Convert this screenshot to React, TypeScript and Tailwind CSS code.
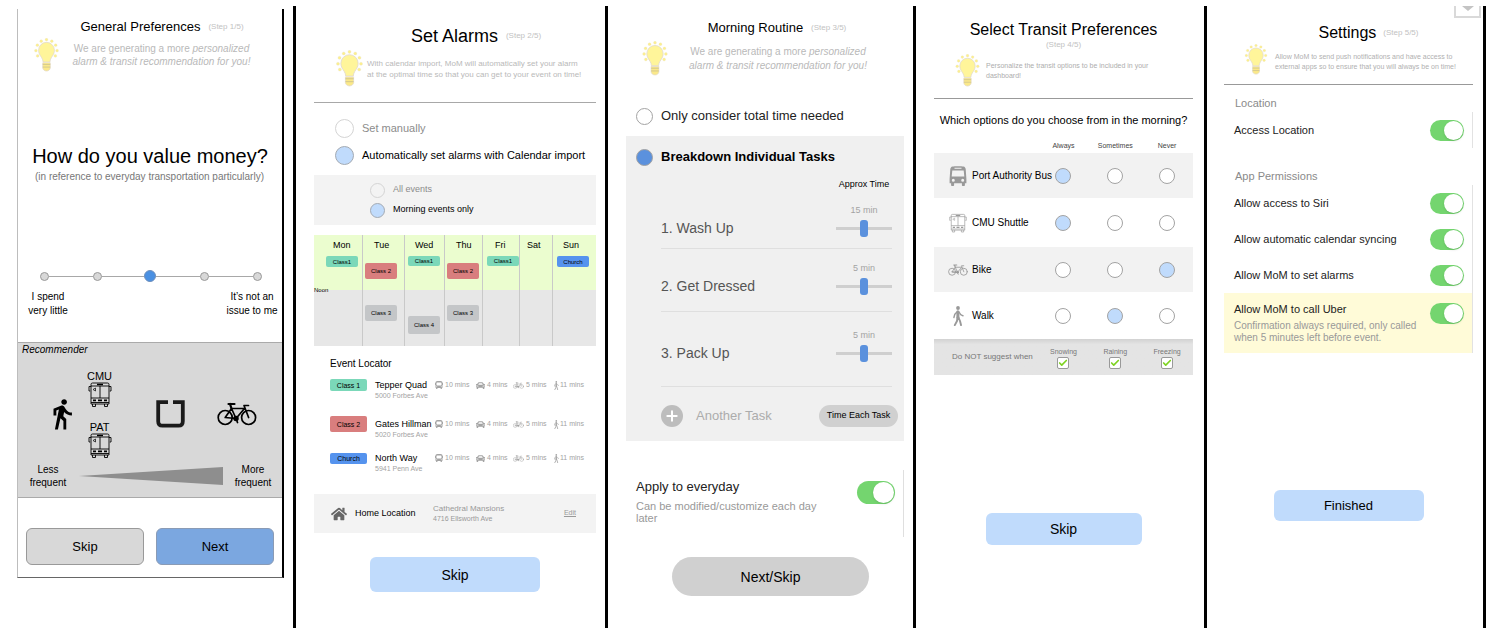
import type { ReactNode } from "react";
import { FaBus, FaCar, FaHome } from "react-icons/fa";
import { MdDirectionsWalk } from "react-icons/md";
import { Check, Plus } from "lucide-react";

type IconProps = { className?: string };

function Bulb({ className }: IconProps) {
  return (
    <svg viewBox="0 0 26 36" className={className} aria-hidden="true">
      <g fill="#fdf08c" stroke="#e6dfd0" strokeWidth="0.3">
        <circle cx="13" cy="1.8" r="1.500" />
        <circle cx="7.4" cy="3.4" r="1.500" />
        <circle cx="18.6" cy="3.4" r="1.500" />
        <circle cx="3.3" cy="7.6" r="1.500" />
        <circle cx="22.7" cy="7.6" r="1.500" />
        <circle cx="1.8" cy="13.4" r="1.500" />
        <circle cx="24.2" cy="13.4" r="1.500" />
        <circle cx="3.6" cy="19" r="1.500" />
        <circle cx="22.4" cy="19" r="1.500" />
      </g>
      <path
        d="M13 4.600a8.400 8.400 0 0 0-8.400 8.400c0 3.600 1.900 5.600 3.300 7.900.9 1.500 1.300 2.800 1.400 4.500h7.400c.1-1.700.5-3 1.400-4.500 1.400-2.300 3.300-4.300 3.300-7.900A8.400 8.400 0 0 0 13 4.600z"
        fill="#fff59a"
        stroke="#e0d8cc"
        strokeWidth="0.8"
      />
      <path
        d="M9 26.200h8v5.500c0 1.500-1.700 3.300-4 3.300s-4-1.800-4-3.300z"
        fill="#fbe98a"
        stroke="#e0d8cc"
        strokeWidth="0.7"
      />
      <path d="M9 28h8M9 30.800h8" stroke="#c9c08e" strokeWidth="0.8" />
    </svg>
  );
}

function BusOutline({ className }: IconProps) {
  return (
    <svg
      viewBox="0 0 24 25"
      className={className}
      fill="none"
      stroke="currentColor"
      strokeWidth="0.9"
      aria-hidden="true"
    >
      <path d="M4.500 1h15a1.500 1.500 0 0 1 1.500 1.500V22H3V2.500A1.500 1.500 0 0 1 4.500 1z" />
      <path d="M3 4h18M3 16h18M12 4v12M3 20.500h18" />
      <path d="M9 2.500h6" strokeWidth="1.500" />
      <path d="M3 4.500H1v4.500h1.200M21 4.500h2v4.500h-1.200" />
      <path d="M4.500 22v2.500h3V22M16.500 22v2.500h3V22" />
      <path d="M5 18.300h3M10 18.300h4M16 18.300h3" strokeWidth="1.800" />
      <path d="M5 7.500l2.500-1.500v3z" strokeWidth="0.700" />
    </svg>
  );
}

function BusSolid({ className }: IconProps) {
  return (
    <svg viewBox="0 0 18 20" className={className} fill="currentColor" aria-hidden="true">
      <path
        fillRule="evenodd"
        d="M3.500.5C5.500 0 12.500 0 14.500.5c1.300.3 2 1.300 2.200 2.600l.7 9.900v4.300h-1.500V19c0 .6-.4 1-1 1h-1c-.6 0-1-.4-1-1v-1.700H5.100V19c0 .6-.4 1-1 1h-1c-.6 0-1-.4-1-1v-1.700H.6V13l.7-9.900C1.500 1.800 2.200.800 3.500.5zM5.500 1.800v1h7v-1zM3.300 4.500 2.700 10.500h12.600l-.6-6zM4.300 12.700a1.500 1.500 0 1 0 0 3 1.500 1.500 0 0 0 0-3zm9.400 0a1.500 1.500 0 1 0 0 3 1.500 1.500 0 0 0 0-3z"
      />
    </svg>
  );
}

function Bike({ className }: IconProps) {
  return (
    <svg
      viewBox="0 0 40 24"
      className={className}
      fill="none"
      stroke="currentColor"
      strokeWidth="1.700"
      strokeLinecap="round"
      strokeLinejoin="round"
      aria-hidden="true"
    >
      <circle cx="8.200" cy="15.500" r="7" />
      <circle cx="31.600" cy="15.500" r="7" />
      <path d="M8.200 15.500 14.500 6.500h13l-8.500 10zM14.500 6.500l4.500 10M31.600 15.500 27 3.500h4.500M8.200 15.500l10.800 1" />
      <path d="M11.500 2h6M14.500 6.500 13 2" strokeWidth="2.200" />
      <circle cx="19" cy="16.500" r="1.900" fill="currentColor" />
      <path d="M19 16.500l1.500 4" />
    </svg>
  );
}

function Pedestrian({ className }: IconProps) {
  return (
    <svg
      viewBox="0 0 11 20"
      className={className}
      fill="none"
      stroke="currentColor"
      strokeLinecap="round"
      strokeLinejoin="round"
      aria-hidden="true"
    >
      <circle cx="5" cy="2" r="1.900" fill="currentColor" stroke="none" />
      <path d="M4.900 5.800v5.700" strokeWidth="3" />
      <path d="M4 6 1.800 8.300.9 11.500M6 6l1.700 2.700 2.400 1.100" strokeWidth="1.400" />
      <path d="M4.500 11.500 4 15l-2.200 4.100M5.500 11.500 7 15l1 4.100" strokeWidth="1.900" />
    </svg>
  );
}

function UberMark({ className }: IconProps) {
  return (
    <svg viewBox="0 0 29 28" className={className} aria-hidden="true">
      <path
        d="M12 2.200H2.200v19c0 2.700 1.600 4.500 4.300 4.500h16c2.700 0 4.300-1.800 4.300-4.500v-19H17"
        fill="none"
        stroke="currentColor"
        strokeWidth="3.800"
      />
    </svg>
  );
}

function Title({ text, step, className }: { text: string; step: string; className: string }) {
  return (
    <header className={`flex items-center whitespace-nowrap ${className}`}>
      <h2>{text}</h2>
      <span className="text-[8px] text-[#c2c2c2]">({step})</span>
    </header>
  );
}

function Recommendation() {
  return (
    <p className="flex-1 whitespace-nowrap text-center text-[10px] text-[#b9b9b9]">
      We are generating a more <em>personalized</em>
      <br />
      <em>alarm &amp; transit recommendation for you!</em>
    </p>
  );
}

function Toggle({ id, large }: { id: string; large?: boolean }) {
  const size = large
    ? "h-[23px] w-[38px] before:size-[21px] checked:before:ml-[15px]"
    : "h-[21px] w-[34px] before:size-[19px] checked:before:ml-[13px]";
  return (
    <input
      id={id}
      type="checkbox"
      defaultChecked
      className={`block shrink-0 cursor-pointer appearance-none rounded-full bg-gray-300 p-px before:block before:rounded-full before:bg-white before:shadow-sm before:content-[''] checked:bg-[#74d56f] ${size}`}
    />
  );
}

const action = "flex items-center justify-center rounded-md bg-[#c0dbfc] text-black";

/* ---------- Step 1 ---------- */

function GeneralPreferences() {
  return (
    <section className="min-w-0 border-r-[3px] border-black pt-[3px] pr-[9px] pl-[17px]">
      <div className="border-b border-l border-r-2 border-b-[#666] border-l-[#bdbdbd] border-r-black pt-[10px] pb-3">
        <Title text="General Preferences" step="Step 1/5" className="h-4 justify-center gap-2 pl-6 text-[13px]" />
        <div className="mt-[3px] flex h-[34px] items-center pr-[18px] pl-4 leading-[13px]">
          <Bulb className="h-[34px] w-[25px]" />
          <Recommendation />
        </div>
        <h3 className="mt-[70px] h-7 whitespace-nowrap text-center text-xl leading-7">How do you value money?</h3>
        <p className="h-[14px] whitespace-nowrap pl-[17px] text-[10px] leading-[14px] text-[#777]">
          (in reference to everyday transportation particularly)
        </p>

        <fieldset className="mt-[86px] flex h-3 items-center pr-5 pl-[22px]">
          {[1, 2, 3, 4, 5].map((n) => (
            <div key={n} className={n === 1 ? "flex items-center" : "flex flex-1 items-center"}>
              {n > 1 && <div className="h-px flex-1 bg-[#a8a8a8]" />}
              <input
                type="radio"
                name="money"
                aria-label={`Value ${n} of 5`}
                defaultChecked={n === 3}
                className="size-[9px] appearance-none rounded-full border border-[#999] bg-[#d8d8d8] checked:size-3 checked:border-[#6f8fbb] checked:bg-[#4a90e2]"
              />
            </div>
          ))}
        </fieldset>
        <div className="mt-2 flex justify-between text-center text-[10px] leading-[14px]">
          <p className="w-[60px]">I spend<br />very little</p>
          <p className="w-[60px] whitespace-nowrap">It’s not an<br />issue to me</p>
        </div>

        <div className="mt-6 border-y border-[#aaa] bg-[#d8d8d8] pb-2">
          <p className="h-[14px] pl-1 text-[10px] italic leading-[14px]">Recommender</p>
          <div className="mt-[13px] flex items-center pl-[27px]">
            <MdDirectionsWalk className="size-[34px]" />
            <div className="ml-2 flex flex-col gap-[14px] text-center text-[11px] leading-3">
              <div className="flex flex-col items-center">
                CMU
                <BusOutline className="h-[25px] w-6" />
              </div>
              <div className="flex flex-col items-center">
                PAT
                <BusOutline className="h-[25px] w-6" />
              </div>
            </div>
            <UberMark className="ml-[44px] h-7 w-[29px] text-[#1a1a1a]" />
            <Bike className="ml-8 h-6 w-10" />
          </div>
          <div className="mt-[5px] flex items-center text-center text-[10px] leading-[13px]">
            <p className="w-[60px]">Less<br />frequent</p>
            <svg viewBox="0 0 148 18" preserveAspectRatio="none" className="mx-px h-[18px] min-w-0 flex-1" aria-hidden="true">
              <path d="M0 9 148 0v18z" fill="#8e8e8e" />
            </svg>
            <p className="w-[58px]">More<br />frequent</p>
          </div>
        </div>

        <div className="mt-[30px] flex gap-3 px-2 text-[13px]">
          <button className="h-[37px] flex-1 rounded-md border border-[#999] bg-[#d8d8d8]">Skip</button>
          <button className="h-[37px] flex-1 rounded-md border border-[#8a9bb5] bg-[#7ba7e0]">Next</button>
        </div>
      </div>
    </section>
  );
}

/* ---------- Step 2 ---------- */

const radioPale =
  "shrink-0 appearance-none rounded-full border border-[#d4d4d4] checked:border-[#a3aab3] checked:bg-[#c0dbfc]";

const teal = "bg-[#7bd8b9]";
const red = "bg-[#d97e7e]";
const blue = "bg-[#5593ee]";
const grey = "bg-[#c4c6c8]";

type Chip = { text: string; className: string };

const week: { day: string; head: string; am?: Chip; pm?: Chip }[] = [
  { day: "Mon", head: "pl-[19px]", am: { text: "Class1", className: `mt-0 ml-3 h-[11px] ${teal}` } },
  {
    day: "Tue",
    head: "pl-[11px]",
    am: { text: "Class 2", className: `mt-3 ml-[2px] h-4 ${red}` },
    pm: { text: "Class 3", className: `mt-[15px] ml-[2px] h-4 ${grey}` },
  },
  {
    day: "Wed",
    head: "pl-[10px]",
    am: { text: "Class1", className: `mt-[2px] ml-[3px] h-[10px] ${teal}` },
    pm: { text: "Class 4", className: `mt-[26px] ml-[3px] h-[18px] ${grey}` },
  },
  {
    day: "Thu",
    head: "pl-[11px]",
    am: { text: "Class 2", className: `mt-3 ml-[2px] h-4 ${red}` },
    pm: { text: "Class 3", className: `mt-[15px] ml-[2px] h-4 ${grey}` },
  },
  { day: "Fri", head: "pl-3", am: { text: "Class1", className: `mt-[2px] ml-1 h-[10px] ${teal}` } },
  { day: "Sat", head: "pl-[7px]" },
  { day: "Sun", head: "pl-[10px]", am: { text: "Church", className: `mt-0 ml-1 h-[11px] ${blue}` } },
];

function CalendarChip({ chip }: { chip: Chip }) {
  return (
    <div
      className={`flex w-8 items-center justify-center rounded-[2px] text-[6px] leading-none whitespace-nowrap ${chip.className}`}
    >
      {chip.text}
    </div>
  );
}

const places = [
  { tag: "Class 1", color: teal, tagSize: "h-3", row: "h-[39px]", name: "Tepper Quad", address: "5000 Forbes Ave" },
  { tag: "Class 2", color: red, tagSize: "h-4", row: "h-[34px]", name: "Gates Hillman", address: "5020 Forbes Ave" },
  { tag: "Church", color: blue, tagSize: "h-[11px]", row: "h-[43px]", name: "North Way", address: "5941 Penn Ave" },
];

function SetAlarms() {
  return (
    <section className="min-w-0 border-r-[3px] border-black pt-[18px] pr-[9px] pl-[18px]">
      <Title text="Set Alarms" step="Step 2/5" className="h-6 justify-center gap-2 pl-[42px] text-lg" />
      <div className="mt-[2px] flex h-[37px] items-center gap-1 pl-[22px]">
        <Bulb className="h-[37px] w-[27px] shrink-0" />
        <p className="whitespace-nowrap text-[8px] leading-[11px] text-[#b9b9b9]">
          With calendar import, MoM will automatically set your alarm
          <br />
          at the optimal time so that you can get to your event on time!
        </p>
      </div>
      <hr className="mt-[15px] border-[#a8a8a8]" />
      <div className="mt-[15px] flex flex-col gap-[7px] pl-[21px] text-[11px]">
        <label className="flex h-5 items-center gap-2 text-[#8c8c8c]">
          <input type="radio" name="alarm" className={`size-[19px] ${radioPale}`} />
          Set manually
        </label>
        <label className="flex h-5 items-center gap-2 whitespace-nowrap">
          <input type="radio" name="alarm" defaultChecked className={`size-[19px] ${radioPale}`} />
          Automatically set alarms with Calendar import
        </label>
      </div>
      <div className="mt-[10px] flex flex-col gap-1 bg-[#f3f3f3] py-[7px] pl-14 text-[9px]">
        <label className="flex h-4 items-center gap-2 text-[#8c8c8c]">
          <input type="radio" name="events" className={`size-[15px] ${radioPale}`} />
          All events
        </label>
        <label className="flex h-4 items-center gap-2">
          <input type="radio" name="events" defaultChecked className={`size-[15px] ${radioPale}`} />
          Morning events only
        </label>
      </div>

      <div className="relative mt-[10px]">
        <div className="grid grid-cols-[49fr_42fr_40fr_38fr_37fr_33fr_43fr]">
          {week.map((d) => (
            <div key={d.day} className="min-w-0 border-r border-[#c9c9c9] last:border-r-0">
              <div className="h-[55px] bg-[#ebfdcf] pt-1">
                <p className={`mb-[5px] h-3 text-[9px] leading-3 ${d.head}`}>{d.day}</p>
                {d.am && <CalendarChip chip={d.am} />}
              </div>
              <div className="flex h-14 flex-col bg-[#e7e7e7]">{d.pm && <CalendarChip chip={d.pm} />}</div>
            </div>
          ))}
        </div>
        <span className="absolute top-[51px] left-0 text-[6px] leading-2">Noon</span>
      </div>

      <h3 className="mt-[10px] h-4 pl-4 text-[10px] leading-4">Event Locator</h3>
      <ul className="mt-[6px] pl-4">
        {places.map((p) => (
          <li key={p.name} className={`grid grid-cols-[45px_60px_41px_37px_41px_1fr] whitespace-nowrap text-[7px] text-[#a3a3a3] ${p.row}`}>
            <div className="flex h-[14px] items-center">
              <span className={`flex w-[37px] items-center justify-center rounded-[2px] text-[7px] leading-none text-black ${p.color} ${p.tagSize}`}>
                {p.tag}
              </span>
            </div>
            <div>
              <p className="h-[14px] text-[9px] leading-[14px] text-black">{p.name}</p>
              <p className="h-2 leading-2">{p.address}</p>
            </div>
            <span className="flex h-[14px] items-center gap-[2px]"><FaBus className="size-2" />10 mins</span>
            <span className="flex h-[14px] items-center gap-[2px]"><FaCar className="size-[9px]" />4 mins</span>
            <span className="flex h-[14px] items-center gap-[2px]"><Bike className="h-[7px] w-[11px]" />5 mins</span>
            <span className="flex h-[14px] items-center gap-px"><Pedestrian className="h-[9px] w-[5px]" />11 mins</span>
          </li>
        ))}
      </ul>

      <div className="flex h-[39px] items-center bg-[#f3f3f3] pr-5 pl-[17px]">
        <FaHome className="size-4 text-[#666]" />
        <h3 className="ml-2 w-[78px] text-[9px]">Home Location</h3>
        <p className="flex-1 text-[7px] leading-[10px] text-[#999]">
          <span className="text-[8px]">Cathedral Mansions</span>
          <br />
          4716 Ellsworth Ave
        </p>
        <a href="#edit" className="text-[7px] text-[#999] underline">Edit</a>
      </div>
      <button className={`mx-auto mt-6 h-[35px] w-[170px] text-sm ${action}`}>Skip</button>
    </section>
  );
}

/* ---------- Step 3 ---------- */

const radioBlue =
  "size-[17px] shrink-0 appearance-none rounded-full border border-[#a3a3a3] bg-white checked:bg-[#5b91dd]";

const tasks = [
  { id: "wash", label: "1. Wash Up", time: "15 min", row: "h-[59px] pb-[11px]" },
  { id: "dress", label: "2. Get Dressed", time: "5 min", row: "h-[63px] pb-4" },
  { id: "pack", label: "3. Pack Up", time: "5 min", row: "h-[75px] pb-6" },
];

function MorningRoutine() {
  return (
    <section className="min-w-0 border-r-[3px] border-black pt-3 pr-[9px] pl-[18px]">
      <Title text="Morning Routine" step="Step 3/5" className="h-5 justify-center gap-2 pl-6 text-[13px]" />
      <div className="mt-[3px] flex h-[35px] items-center pr-4 pl-4 leading-[14px]">
        <Bulb className="h-[35px] w-[26px]" />
        <Recommendation />
      </div>
      <label className="mt-[30px] flex h-5 items-center gap-2 pl-[10px] text-[13px] text-[#222]">
        <input type="radio" name="routine" className={radioBlue} />
        Only consider total time needed
      </label>
      <div className="mt-[10px] bg-[#f0f0f0] pt-[11px]">
        <label className="flex h-5 items-center gap-2 pl-[10px] text-[13px] font-bold">
          <input type="radio" name="routine" defaultChecked className={radioBlue} />
          Breakdown Individual Tasks
        </label>
        <div className="mt-[11px] pr-3 pl-[35px]">
          <p className="ml-auto h-3 w-14 whitespace-nowrap text-center text-[9px] leading-3">Approx Time</p>
          {tasks.map((t) => (
            <div key={t.id} className={`flex items-end justify-between border-b border-[#dfdfdf] ${t.row}`}>
              <label htmlFor={t.id} className="text-sm leading-[18px] text-[#555]">{t.label}</label>
              <div className="flex w-14 flex-col items-center gap-[3px]">
                <output htmlFor={t.id} className="h-3 text-[9px] leading-3 text-[#a3a3a3]">{t.time}</output>
                <input
                  id={t.id}
                  type="range"
                  className="h-[18px] w-full appearance-none bg-transparent [&::-webkit-slider-runnable-track]:h-[3px] [&::-webkit-slider-runnable-track]:bg-[#cfcfcf] [&::-webkit-slider-thumb]:mt-[-7px] [&::-webkit-slider-thumb]:h-[17px] [&::-webkit-slider-thumb]:w-2 [&::-webkit-slider-thumb]:appearance-none [&::-webkit-slider-thumb]:rounded-[3px] [&::-webkit-slider-thumb]:bg-[#5b91dd]"
                />
              </div>
            </div>
          ))}
        </div>
        <div className="flex h-[54px] items-center justify-between pt-1 pr-[6px] pl-[35px]">
          <button className="flex items-center gap-[13px] text-[13px] text-[#acacac]">
            <span className="flex size-[22px] items-center justify-center rounded-full bg-[#bdbdbd] text-white">
              <Plus className="size-4" strokeWidth={3} />
            </span>
            Another Task
          </button>
          <button className="h-[22px] w-[79px] whitespace-nowrap rounded-full bg-[#d0d0d0] text-[9px]">Time Each Task</button>
        </div>
      </div>

      <div className="mt-[29px] flex h-[67px] justify-between border-r border-[#dfdfdf] pt-[9px] pr-2 pl-[10px]">
        <div className="w-[200px]">
          <label htmlFor="everyday" className="block h-4 text-[13px] leading-4 text-[#222]">Apply to everyday</label>
          <p className="mt-[5px] text-[11px] leading-3 text-[#999]">Can be modified/customize each day later</p>
        </div>
        <div className="pt-[2px]"><Toggle id="everyday" large /></div>
      </div>
      <div className="mt-5 flex justify-center pl-[11px]">
        <button className="h-[39px] w-[197px] rounded-full bg-[#d0d0d0] text-sm">Next/Skip</button>
      </div>
    </section>
  );
}

/* ---------- Step 4 ---------- */

const choices = ["Always", "Sometimes", "Never"];

const modes: { name: string; icon: ReactNode; pick: number; row: string }[] = [
  { name: "Port Authority Bus", icon: <BusSolid className="h-5 w-[18px]" />, pick: 0, row: "h-[45px] bg-[#f2f2f2]" },
  { name: "CMU Shuttle", icon: <BusOutline className="h-5 w-[18px]" />, pick: 0, row: "h-[49px]" },
  { name: "Bike", icon: <Bike className="h-3 w-5" />, pick: 2, row: "h-[45px] bg-[#f2f2f2]" },
  { name: "Walk", icon: <Pedestrian className="h-5 w-[11px]" />, pick: 1, row: "h-[47px]" },
];

function TransitPreferences() {
  return (
    <section className="min-w-0 border-r-[3px] border-black pt-[14px] pr-[11px] pl-[18px]">
      <Title
        text="Select Transit Preferences"
        step="Step 4/5"
        className="h-[30px] flex-col text-base leading-5 [&>span]:h-[10px] [&>span]:leading-[10px]"
      />
      <div className="mt-1 flex h-[33px] items-center gap-[6px] pl-[21px]">
        <Bulb className="h-[33px] w-[25px] shrink-0" />
        <p className="text-[7px] leading-[10px] text-[#adadad]">
          Personalize the transit options to be included in your
          <br />
          dashboard!
        </p>
      </div>
      <hr className="mt-[11px] border-[#999]" />
      <h3 className="mt-[13px] h-4 whitespace-nowrap text-center text-[11px] leading-4">
        Which options do you choose from in the morning?
      </h3>
      <table className="mt-[10px] w-full table-fixed border-collapse">
        <thead>
          <tr className="h-[15px] text-[7px] leading-[15px] text-[#444]">
            <th className="w-[40%]" />
            {choices.map((c) => (
              <th key={c} className="p-0 font-normal">{c}</th>
            ))}
          </tr>
        </thead>
        <tbody>
          {modes.map((m) => (
            <tr key={m.name} className={m.row}>
              <th className="p-0 pl-[14px] font-normal">
                <span className="flex items-center gap-1 whitespace-nowrap text-[10px]">
                  <span className="flex w-5 shrink-0 justify-center text-[#999]">{m.icon}</span>
                  {m.name}
                </span>
              </th>
              {choices.map((c, i) => (
                <td key={c} className="p-0">
                  <input
                    type="radio"
                    name={m.name}
                    aria-label={`${m.name}: ${c}`}
                    defaultChecked={i === m.pick}
                    className="mx-auto block size-4 appearance-none rounded-full border border-[#a3a3a3] bg-white checked:bg-[#c0dbfc]"
                  />
                </td>
              ))}
            </tr>
          ))}
        </tbody>
        <tfoot>
          <tr className="h-9 bg-[#e4e4e4] bg-linear-to-b from-[#d2d2d2] to-[#e4e4e4] to-15%">
            <th className="p-0 pl-[18px] text-left text-[8px] font-normal whitespace-nowrap text-[#777]">
              Do NOT suggest when
            </th>
            {["Snowing", "Raining", "Freezing"].map((w) => (
              <td key={w} className="p-0">
                <label className="flex flex-col items-center text-[7px] leading-[11px] text-[#777]">
                  {w}
                  <span className="grid size-3">
                    <input
                      type="checkbox"
                      defaultChecked
                      className="peer col-start-1 row-start-1 size-3 appearance-none rounded-[2px] border border-[#999] bg-white"
                    />
                    <Check
                      className="pointer-events-none invisible col-start-1 row-start-1 m-px size-[10px] text-[#7ed321] peer-checked:visible"
                      strokeWidth={4}
                    />
                  </span>
                </label>
              </td>
            ))}
          </tr>
        </tfoot>
      </table>
      <button className={`mx-auto mt-[138px] h-8 w-[156px] text-sm ${action}`}>Skip</button>
    </section>
  );
}

/* ---------- Step 5 ---------- */

function SettingRow({ id, label }: { id: string; label: string }) {
  return (
    <div className="flex h-9 items-center justify-between border-r border-[#e2e2e2] pr-2 pl-[10px]">
      <label htmlFor={id} className="text-[11px] text-[#222]">{label}</label>
      <Toggle id={id} />
    </div>
  );
}

function Settings() {
  return (
    <section className="relative min-w-0 border-r-[3px] border-black pt-[17px] pr-[10px] pl-[17px]">
      <button
        aria-label="Collapse"
        className="absolute top-0 right-[2px] flex h-3 w-[27px] justify-center border-x-2 border-b-2 border-[#d9d9d9]"
      >
        <svg viewBox="0 0 12 5" className="h-[5px] w-3" aria-hidden="true">
          <path d="M0 0h12L6 5z" fill="#c4c4c4" />
        </svg>
      </button>
      <Title text="Settings" step="Step 5/5" className="h-5 justify-center gap-[7px] pl-10 text-base" />
      <div className="mt-px flex h-[31px] items-center gap-[7px] pl-5">
        <Bulb className="h-[31px] w-6 shrink-0" />
        <p className="whitespace-nowrap pt-1 text-[7px] leading-[10px] text-[#b0b0b0]">
          Allow MoM to send push notifications and have access to
          <br />
          external apps so to ensure that you will always be on time!
        </p>
      </div>
      <hr className="mt-[9px] border-[#999]" />
      <h3 className="mt-[11px] h-[14px] pl-[11px] text-[11px] leading-[14px] text-[#8a8a8a]">Location</h3>
      <div className="mt-[2px]">
        <SettingRow id="location" label="Access Location" />
      </div>
      <h3 className="mt-[21px] h-[14px] pl-[11px] text-[11px] leading-[14px] text-[#8a8a8a]">App Permissions</h3>
      <div className="mt-[2px]">
        <SettingRow id="siri" label="Allow access to Siri" />
        <SettingRow id="calendar" label="Allow automatic calendar syncing" />
        <SettingRow id="alarms" label="Allow MoM to set alarms" />
        <div className="flex h-[60px] justify-between border-r border-[#e2e2e2] bg-[#fffbd8] pt-2 pr-2 pl-[10px]">
          <div>
            <label htmlFor="uber" className="block h-4 text-[11px] leading-4 text-[#222]">Allow MoM to call Uber</label>
            <p className="mt-[3px] whitespace-nowrap text-[10px] leading-3 text-[#999]">
              Confirmation always required, only called
              <br />
              when 5 minutes left before event.
            </p>
          </div>
          <div className="pt-[2px]"><Toggle id="uber" /></div>
        </div>
      </div>
      <button className={`mx-auto mt-[137px] h-[31px] w-[150px] text-[13px] ${action}`}>Finished</button>
    </section>
  );
}

export default function App() {
  return (
    <main className="grid min-h-screen grid-cols-[296fr_312fr_308fr_291fr_279fr_6fr] bg-white pt-[6px] pb-[10px] font-['Liberation_Sans',Arial,sans-serif] text-black">
      <GeneralPreferences />
      <SetAlarms />
      <MorningRoutine />
      <TransitPreferences />
      <Settings />
    </main>
  );
}
